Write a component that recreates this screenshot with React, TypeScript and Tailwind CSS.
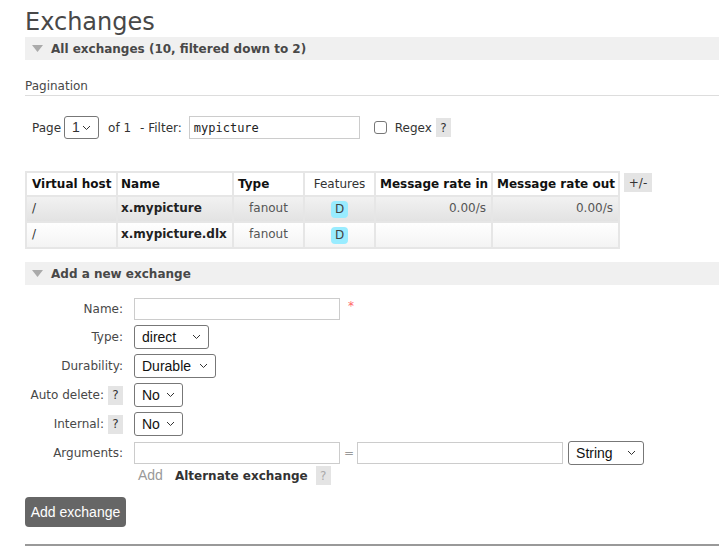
import React from "react";

const font = "font-['DejaVu_Sans',Verdana,sans-serif]";
const sysFont = "font-['Liberation_Sans',Arial,sans-serif]";

const Help = ({ light }: { light?: boolean }) => (
  <span
    className={`inline-flex h-[19px] w-[15px] items-center justify-center bg-[#e4e4e4] text-[12px] ${
      light ? "text-[#aaa]" : "text-[#333]"
    }`}
  >
    ?
  </span>
);

const Caret = () => (
  <svg width="9" height="6" viewBox="0 0 9 6" className="ml-auto">
    <path d="M1 1l3.5 3.5L8 1" fill="none" stroke="#333" strokeWidth="1" />
  </svg>
);

const Select = ({ value, width }: { value: string; width: string }) => (
  <div
    className={`flex h-[24px] items-center rounded-[3px] border border-[#777] bg-white pl-[7px] pr-[7px] text-[14px] text-[#111] ${sysFont} ${width}`}
  >
    <span>{value}</span>
    <Caret />
  </div>
);

const SectionBar = ({ title }: { title: string }) => (
  <div className="flex h-[23px] items-center bg-[#f0f0f0] pl-[7px]">
    <svg width="11" height="7" viewBox="0 0 11 7">
      <path d="M0 0h11L5.5 7z" fill="#aaa" />
    </svg>
    <span className="ml-[8px] text-[12px] font-bold text-[#484848]">{title}</span>
  </div>
);

const Badge = () => (
  <span className="inline-flex h-[17px] w-[17px] items-center justify-center rounded-[4px] bg-[#99ecff] text-[12px] text-[#444]">
    D
  </span>
);

const rows = [
  { vhost: "/", name: "x.mypicture", type: "fanout", in: "0.00/s", out: "0.00/s", alt: true },
  { vhost: "/", name: "x.mypicture.dlx", type: "fanout", in: "", out: "", alt: false },
];

const FormRow = ({
  label,
  help,
  children,
}: {
  label: string;
  help?: boolean;
  children: React.ReactNode;
}) => (
  <div className="flex items-center">
    <div className="flex w-[98px] items-center justify-end gap-[4px] text-[12px] text-[#484848]">
      <span>{label}</span>
      {help && <Help />}
    </div>
    <div className="ml-[11px] flex items-center">{children}</div>
  </div>
);

const cell = "border-2 border-[#e6e6e6] whitespace-nowrap";

const App = () => {
  return (
    <div className={`h-[549px] w-[719px] overflow-hidden bg-white pl-[25px] text-[#484848] ${font}`}>
      <h1 className="pt-[7px] text-[24px] leading-[30px] text-[#484848]">Exchanges</h1>
      <SectionBar title="All exchanges (10, filtered down to 2)" />

      <div className="mt-[18px] border-b border-[#ddd] pb-[1px] text-[12px] leading-[16px]">
        Pagination
      </div>

      <div className="mt-[20px] flex items-center pl-[7px] text-[12px] text-[#333]">
        <span>Page</span>
        <div className={`ml-[3px] flex h-[23px] w-[35px] items-center rounded-[3px] border border-[#777] px-[7px] text-[14px] ${sysFont}`}>
          1
          <Caret />
        </div>
        <span className="ml-[9px]">of 1</span>
        <span className="ml-[9px]">- Filter:</span>
        <div className="ml-[7px] flex h-[23px] w-[171px] items-center border border-[#ccc] pl-[4px] font-['DejaVu_Sans_Mono',monospace] text-[12px] text-[#222]">
          mypicture
        </div>
        <span className="ml-[14px] h-[13px] w-[13px] rounded-[3px] border border-[#777]" />
        <span className="ml-[8px]">Regex</span>
        <span className="ml-[4px]">
          <Help />
        </span>
      </div>

      <div className="mt-[32px] flex items-start">
        <table className="w-[593px] table-fixed border-collapse border-2 border-[#e6e6e6] text-[12px]">
          <colgroup>
            <col className="w-[91px]" />
            <col className="w-[116px]" />
            <col className="w-[71px]" />
            <col className="w-[71px]" />
            <col className="w-[117px]" />
            <col className="w-[127px]" />
          </colgroup>
          <thead>
            <tr className="h-[24px] bg-white text-left text-[#111]">
              <th className={`${cell} pl-[5px] font-bold`}>Virtual host</th>
              <th className={`${cell} pl-[3px] font-bold`}>Name</th>
              <th className={`${cell} pl-[4px] font-bold`}>Type</th>
              <th className={`${cell} text-center font-normal text-[#333]`}>Features</th>
              <th className={`${cell} pl-[4px] font-bold`}>Message rate in</th>
              <th className={`${cell} pl-[4px] font-bold`}>Message rate out</th>
            </tr>
          </thead>
          <tbody>
            {rows.map((r, i) => (
              <tr
                key={i}
                className={`h-[26px] ${
                  r.alt
                    ? "bg-[linear-gradient(#f2f2f2,#e2e2e2)]"
                    : "bg-[linear-gradient(#ffffff,#f3f3f3)]"
                }`}
              >
                <td className={`${cell} pl-[5px] align-top pt-[2px] text-[#333]`}>{r.vhost}</td>
                <td className={`${cell} pl-[3px] align-top pt-[2px] font-bold text-[#222]`}>{r.name}</td>
                <td className={`${cell} text-center align-top pt-[2px] text-[#555]`}>{r.type}</td>
                <td className={`${cell} text-center align-top pt-[3px]`}>
                  <Badge />
                </td>
                <td className={`${cell} pr-[5px] text-right align-top pt-[2px] text-[#555]`}>{r.in}</td>
                <td className={`${cell} pr-[5px] text-right align-top pt-[2px] text-[#555]`}>{r.out}</td>
              </tr>
            ))}
          </tbody>
        </table>
        <span className="ml-[4px] mt-[2px] flex h-[19px] w-[28px] items-center justify-center bg-[#e4e4e4] text-[12px] text-[#333]">
          +/-
        </span>
      </div>

      <div className="mt-[13px]">
        <SectionBar title="Add a new exchange" />
      </div>

      <div className="mt-[13px] flex flex-col gap-[5px]">
        <FormRow label="Name:">
          <div className="h-[22px] w-[206px] border border-[#ccc]" />
          <span className="ml-[8px] -mt-[6px] text-[12px] text-[#f66]">*</span>
        </FormRow>
        <FormRow label="Type:">
          <Select value="direct" width="w-[75px]" />
        </FormRow>
        <FormRow label="Durability:">
          <Select value="Durable" width="w-[82px]" />
        </FormRow>
        <FormRow label="Auto delete:" help>
          <Select value="No" width="w-[49px]" />
        </FormRow>
        <FormRow label="Internal:" help>
          <Select value="No" width="w-[49px]" />
        </FormRow>
        <FormRow label="Arguments:">
          <div className="h-[22px] w-[206px] border border-[#ccc]" />
          <span className="ml-[4px] text-[12px] text-[#999]">=</span>
          <div className="ml-[3px] h-[22px] w-[206px] border border-[#ccc]" />
          <div className="ml-[5px]">
            <Select value="String" width="w-[76px]" />
          </div>
        </FormRow>
      </div>

      <div className="mt-0 flex items-center pl-[113px] text-[12px]">
        <span className={`text-[14px] text-[#999] ${sysFont}`}>Add</span>
        <span className="ml-[12px] font-bold text-[#333]">Alternate exchange</span>
        <span className="ml-[8px]">
          <Help light />
        </span>
      </div>

      <button
        className={`mt-[11px] h-[30px] w-[101px] rounded-[4px] bg-[#666] text-[14px] text-white ${sysFont}`}
      >
        Add exchange
      </button>

      <div className="mt-[17px] border-t-2 border-[#999]" />
    </div>
  );
};

export default App;
